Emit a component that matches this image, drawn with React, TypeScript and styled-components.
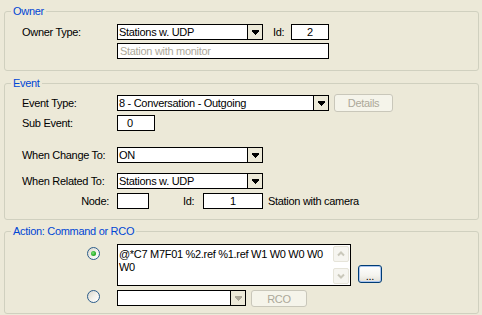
import React from "react";
import styled, { createGlobalStyle, css } from "styled-components";

const GlobalStyle = createGlobalStyle`
  html, body { margin: 0; padding: 0; background: #ece9d8; }
  body {
    font-family: "Liberation Sans", Arial, sans-serif;
    font-size: 11px;
    letter-spacing: -0.3px;
    color: #000;
  }
`;

const Window = styled.div`
  width: 482px;
  height: 315px;
  box-sizing: border-box;
  padding: 5px 3px 0 4px;
  background: #ece9d8;
  display: flex;
  flex-direction: column;
  overflow: hidden;
`;

const Group = styled.fieldset<{ $top?: number }>`
  margin: ${(p) => p.$top ?? 0}px 0 0;
  padding: 0;
  border: 1px solid #d0d0bf;
  border-radius: 3px;
  min-width: 0;
`;

const Legend = styled.legend`
  padding: 0 2px;
  margin-left: 6px;
  color: #0046d5;
  font-size: 11px;
  line-height: 13px;
`;

const GroupBody = styled.div<{ $pt: number; $pb: number; $pl: number }>`
  display: flex;
  flex-direction: column;
  padding: ${(p) => p.$pt}px 0 ${(p) => p.$pb}px ${(p) => p.$pl}px;
`;

const Row = styled.div<{ $h: number; $mt?: number; $align?: string }>`
  display: flex;
  align-items: ${(p) => p.$align ?? "center"};
  height: ${(p) => p.$h}px;
  margin-top: ${(p) => p.$mt ?? 0}px;
`;

const Label = styled.span<{ $right?: boolean }>`
  width: 95px;
  flex: none;
  box-sizing: border-box;
  white-space: nowrap;
  text-align: ${(p) => (p.$right ? "right" : "left")};
  padding-right: ${(p) => (p.$right ? 8 : 0)}px;
`;

const InlineLabel = styled.span<{ $left: number; $width: number }>`
  flex: none;
  margin-left: ${(p) => p.$left}px;
  width: ${(p) => p.$width}px;
  white-space: nowrap;
`;

const Field = styled.div<{ $w: number; $pad?: number; $center?: boolean; $disabled?: boolean }>`
  flex: none;
  box-sizing: border-box;
  width: ${(p) => p.$w}px;
  height: 16px;
  border: 1px solid #000;
  background: #fff;
  line-height: 14px;
  padding: 0 ${(p) => p.$pad ?? 1}px;
  text-align: ${(p) => (p.$center ? "center" : "left")};
  color: ${(p) => (p.$disabled ? "#aca899" : "#000")};
  white-space: nowrap;
  overflow: hidden;
`;

const SelectBox = styled.div<{ $w: number }>`
  flex: none;
  display: flex;
  box-sizing: border-box;
  width: ${(p) => p.$w}px;
  height: 16px;
  border: 1px solid #000;
  background: #fff;
`;

const SelectValue = styled.span`
  flex: 1;
  padding-left: 1px;
  line-height: 14px;
  white-space: nowrap;
  overflow: hidden;
`;

const DropButton = styled.span`
  flex: none;
  width: 15px;
  box-sizing: border-box;
  border-left: 1px solid #000;
  background: #ece9d8;
  display: flex;
  align-items: center;
  justify-content: center;
`;

const PushButton = styled.button<{ $w: number; $h: number; $ml?: number; $primary?: boolean }>`
  flex: none;
  box-sizing: border-box;
  width: ${(p) => p.$w}px;
  height: ${(p) => p.$h}px;
  margin: 0 0 0 ${(p) => p.$ml ?? 0}px;
  padding: 0;
  border-radius: 3px;
  font: inherit;
  letter-spacing: inherit;
  display: flex;
  align-items: center;
  justify-content: center;
  ${(p) =>
    p.$primary
      ? css`
          border: 1px solid #003c74;
          background: linear-gradient(#ffffff 0%, #f4f3ee 60%, #e3e0d6 100%);
          box-shadow: inset 0 0 0 1px #a9c4ef;
          color: #000;
        `
      : css`
          border: 1px solid #c9c7ba;
          background: #f5f4ea;
          color: #aca899;
        `}
`;

const Radio = styled.span<{ $checked?: boolean; $mt?: number }>`
  flex: none;
  position: relative;
  box-sizing: border-box;
  width: 13px;
  height: 13px;
  margin: ${(p) => p.$mt ?? 0}px 17px 0 0;
  border-radius: 50%;
  border: 1px solid #2b5c8a;
  background: linear-gradient(135deg, #d8d6cc 0%, #f3f2ec 55%, #ffffff 100%);
  ${(p) =>
    p.$checked &&
    css`
      &::after {
        content: "";
        position: absolute;
        left: 3px;
        top: 3px;
        width: 5px;
        height: 5px;
        border-radius: 50%;
        background: radial-gradient(circle at 40% 40%, #7ee47a 0%, #2bb02a 55%, #1d8f1d 100%);
      }
    `}
`;

const TextBox = styled.div`
  flex: none;
  display: flex;
  box-sizing: border-box;
  width: 234px;
  height: 42px;
  border: 1px solid #000;
  background: #fff;
`;

const TextContent = styled.div`
  flex: 1;
  padding: 3px 2px 0 1px;
  line-height: 13px;
  overflow: hidden;
  word-wrap: break-word;
`;

const ScrollColumn = styled.div`
  flex: none;
  width: 17px;
  display: flex;
  flex-direction: column;
  justify-content: space-between;
  padding: 1px 0;
`;

const ScrollButton = styled.span`
  box-sizing: border-box;
  width: 16px;
  height: 16px;
  border: 1px solid #e6e4d9;
  border-radius: 2px;
  background: #f6f5f0;
  display: flex;
  align-items: center;
  justify-content: center;
`;

const Trailing = styled.span`
  margin-left: 5px;
  white-space: nowrap;
`;

const EllipsisButton = styled(PushButton)`
  align-self: flex-end;
  margin-bottom: 3px;
  padding-top: 3px;
`;

const Arrow = ({ color = "#000" }: { color?: string }) => (
  <svg width="7" height="5" viewBox="0 0 7 5" shapeRendering="crispEdges">
    <rect x="0" y="0" width="7" height="2" fill={color} />
    <rect x="1" y="2" width="5" height="1" fill={color} />
    <rect x="2" y="3" width="3" height="1" fill={color} />
    <rect x="3" y="4" width="1" height="1" fill={color} />
  </svg>
);

const Chevron = ({ down }: { down?: boolean }) => (
  <svg width="8" height="6" viewBox="0 0 8 6">
    <polyline
      points={down ? "1,1.5 4,4.5 7,1.5" : "1,4.5 4,1.5 7,4.5"}
      fill="none"
      stroke="#cac8bb"
      strokeWidth="2"
    />
  </svg>
);

const Select = ({ w, value, disabled }: { w: number; value: string; disabled?: boolean }) => (
  <SelectBox $w={w}>
    <SelectValue>{value}</SelectValue>
    <DropButton>
      <Arrow color={disabled ? "#aca899" : "#000"} />
    </DropButton>
  </SelectBox>
);

export default function App() {
  return (
    <>
      <GlobalStyle />
      <Window>
        <Group>
          <Legend>Owner</Legend>
          <GroupBody $pt={6} $pb={11} $pl={17}>
            <Row $h={16}>
              <Label>Owner Type:</Label>
              <Select w={146} value="Stations w. UDP" />
              <InlineLabel $left={10} $width={18}>Id:</InlineLabel>
              <Field $w={38} $center>2</Field>
            </Row>
            <Row $h={16} $mt={3}>
              <Label />
              <Field $w={212} $pad={2} $disabled>Station with monitor</Field>
            </Row>
          </GroupBody>
        </Group>

        <Group $top={6}>
          <Legend>Event</Legend>
          <GroupBody $pt={4} $pb={10} $pl={17}>
            <Row $h={18}>
              <Label>Event Type:</Label>
              <Select w={212} value="8 - Conversation - Outgoing" />
              <PushButton $w={59} $h={18} $ml={5} disabled>Details</PushButton>
            </Row>
            <Row $h={16} $mt={3}>
              <Label>Sub Event:</Label>
              <Field $w={38} $pad={9}>0</Field>
            </Row>
            <Row $h={16} $mt={16}>
              <Label>When Change To:</Label>
              <Select w={146} value="ON" />
            </Row>
            <Row $h={16} $mt={10}>
              <Label>When Related To:</Label>
              <Select w={146} value="Stations w. UDP" />
            </Row>
            <Row $h={16} $mt={4}>
              <Label $right>Node:</Label>
              <Field $w={32} />
              <InlineLabel $left={34} $width={20}>Id:</InlineLabel>
              <Field $w={60} $center>1</Field>
              <Trailing>Station with camera</Trailing>
            </Row>
          </GroupBody>
        </Group>

        <Group $top={5}>
          <Legend>Action: Command or RCO</Legend>
          <GroupBody $pt={6} $pb={7} $pl={82}>
            <Row $h={42} $align="flex-start">
              <Radio $checked $mt={3} />
              <TextBox>
                <TextContent>@*C7 M7F01 %2.ref %1.ref W1 W0 W0 W0 W0</TextContent>
                <ScrollColumn>
                  <ScrollButton>
                    <Chevron />
                  </ScrollButton>
                  <ScrollButton>
                    <Chevron down />
                  </ScrollButton>
                </ScrollColumn>
              </TextBox>
              <EllipsisButton $w={24} $h={18} $ml={7} $primary>...</EllipsisButton>
            </Row>
            <Row $h={16} $mt={4} $align="flex-start">
              <Radio />
              <Select w={129} value="" disabled />
              <PushButton $w={56} $h={17} $ml={5} disabled>RCO</PushButton>
            </Row>
          </GroupBody>
        </Group>
      </Window>
    </>
  );
}
